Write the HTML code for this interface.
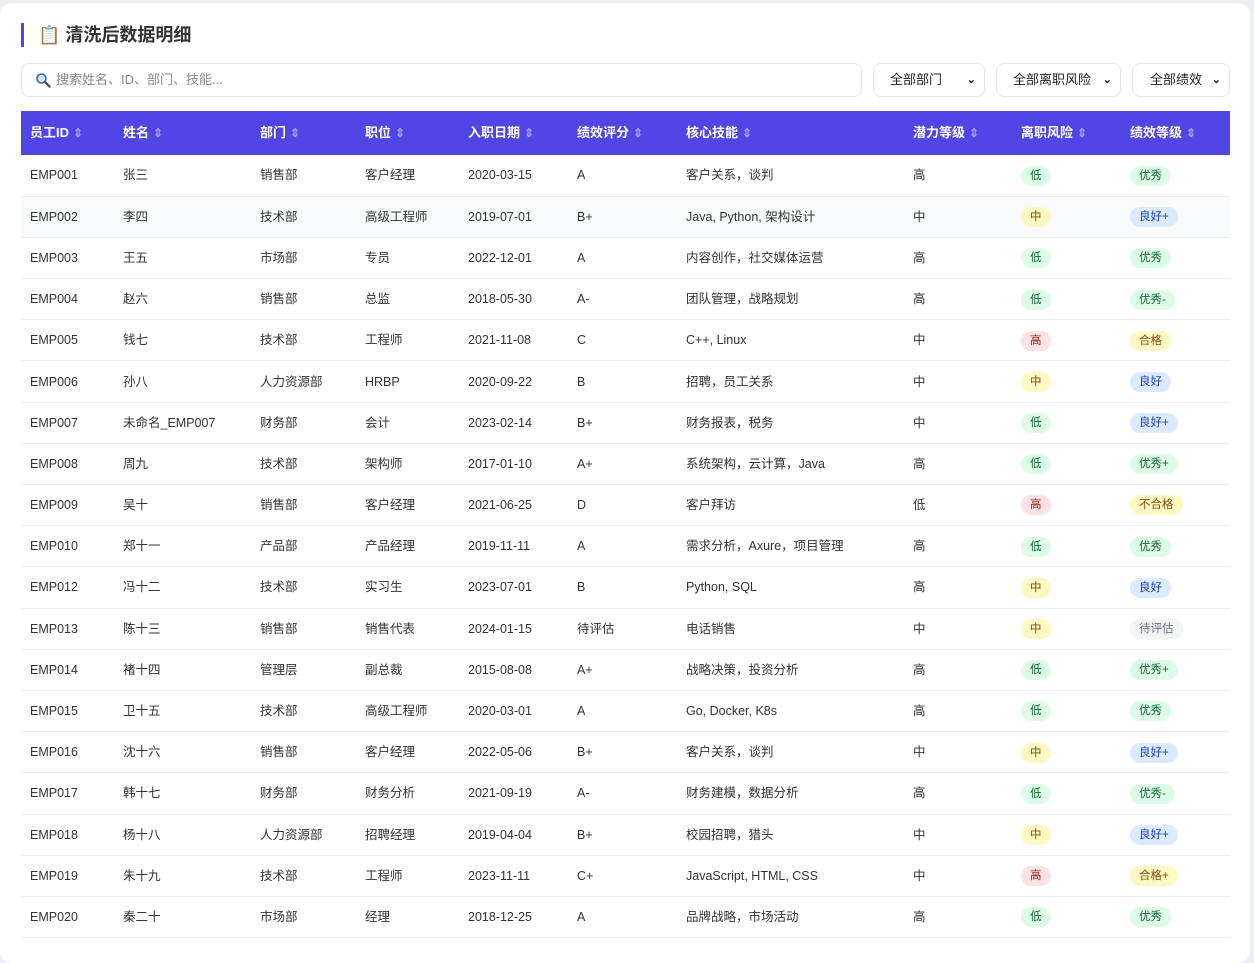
<!DOCTYPE html>
<html><head><meta charset="utf-8"><style>
*{box-sizing:border-box;margin:0;padding:0}
body{width:1254px;height:950px;overflow:hidden;background:#eceef2;font-family:"Liberation Sans","Noto Sans CJK SC",sans-serif;font-size:13px;color:#333}
.card{position:absolute;left:0;top:3px;width:1250px;height:960px;background:#fff;border-radius:12px}
.title{position:absolute;left:21px;top:20px;height:24px;border-left:3px solid #4f46e5;padding-left:14px;font-size:18px;font-weight:bold;color:#333;line-height:24px}
.search{position:absolute;left:21px;top:60px;width:841px;height:34px;border:1px solid #e2e4e8;border-radius:8px;color:#888;font-size:13px;line-height:32px;padding-left:34px}
.search svg{position:absolute;left:13px;top:8px}
.sel{position:absolute;top:60px;height:34px;border:1px solid #e2e4e8;border-radius:8px;font-size:13px;line-height:32px;color:#222}
.sel b{position:absolute;right:8px;top:0;font-size:11px}
table{position:absolute;left:21px;top:108px;width:1209px;border-collapse:collapse}
th{background:#5046e5;color:#fff;height:44px;text-align:left;font-size:13px;padding-left:9px;font-weight:bold;line-height:20px;vertical-align:middle}
th i{font-style:normal;color:#a29cf0;font-size:12px;margin-left:4px}
td{height:41.2px;padding-left:9px;border-bottom:1px solid #ebedf0;color:#333;font-size:12.5px;line-height:20px;vertical-align:middle}
td span{vertical-align:middle}
tr.h td{background:#f8fafc}
.b{display:inline-block;padding:0 9px;height:20px;line-height:20px;border-radius:10px;font-size:11.5px}
.g{background:#dcfce7;color:#166534}.y{background:#fef9c3;color:#854d0e}.r{background:#fee2e2;color:#991b1b}.bl{background:#dbeafe;color:#1e40af}.gr{background:#f3f4f6;color:#6b7280}
</style></head><body>
<div class="card">
<div class="title">📋 清洗后数据明细</div>
<div class="search"><svg width="16" height="16" viewBox="0 0 16 16"><circle cx="6.5" cy="6.5" r="4.5" fill="#cfe3f5" stroke="#3b6b94" stroke-width="1.6"/><path d="M10 10l4.5 4.5" stroke="#555" stroke-width="2.4" stroke-linecap="round"/></svg>搜索姓名、ID、部门、技能...</div>
<div class="sel" style="left:873px;width:112px;padding-left:16px">全部部门<b>⌄</b></div>
<div class="sel" style="left:996px;width:125px;padding-left:16px">全部离职风险<b>⌄</b></div>
<div class="sel" style="left:1132px;width:98px;padding-left:17px">全部绩效<b>⌄</b></div>
<table>
<colgroup><col style="width:93px"><col style="width:137px"><col style="width:105px"><col style="width:103px"><col style="width:109px"><col style="width:109px"><col style="width:227px"><col style="width:108px"><col style="width:109px"><col></colgroup>
<tr><th>员工ID<i>⇕</i></th><th>姓名<i>⇕</i></th><th>部门<i>⇕</i></th><th>职位<i>⇕</i></th><th>入职日期<i>⇕</i></th><th>绩效评分<i>⇕</i></th><th>核心技能<i>⇕</i></th><th>潜力等级<i>⇕</i></th><th>离职风险<i>⇕</i></th><th>绩效等级<i>⇕</i></th></tr>
<tr><td>EMP001</td><td>张三</td><td>销售部</td><td>客户经理</td><td>2020-03-15</td><td>A</td><td>客户关系，谈判</td><td>高</td><td><span class="b g">低</span></td><td><span class="b g">优秀</span></td></tr>
<tr class="h"><td>EMP002</td><td>李四</td><td>技术部</td><td>高级工程师</td><td>2019-07-01</td><td>B+</td><td>Java, Python, 架构设计</td><td>中</td><td><span class="b y">中</span></td><td><span class="b bl">良好+</span></td></tr>
<tr><td>EMP003</td><td>王五</td><td>市场部</td><td>专员</td><td>2022-12-01</td><td>A</td><td>内容创作，社交媒体运营</td><td>高</td><td><span class="b g">低</span></td><td><span class="b g">优秀</span></td></tr>
<tr><td>EMP004</td><td>赵六</td><td>销售部</td><td>总监</td><td>2018-05-30</td><td>A-</td><td>团队管理，战略规划</td><td>高</td><td><span class="b g">低</span></td><td><span class="b g">优秀-</span></td></tr>
<tr><td>EMP005</td><td>钱七</td><td>技术部</td><td>工程师</td><td>2021-11-08</td><td>C</td><td>C++, Linux</td><td>中</td><td><span class="b r">高</span></td><td><span class="b y">合格</span></td></tr>
<tr><td>EMP006</td><td>孙八</td><td>人力资源部</td><td>HRBP</td><td>2020-09-22</td><td>B</td><td>招聘，员工关系</td><td>中</td><td><span class="b y">中</span></td><td><span class="b bl">良好</span></td></tr>
<tr><td>EMP007</td><td>未命名_EMP007</td><td>财务部</td><td>会计</td><td>2023-02-14</td><td>B+</td><td>财务报表，税务</td><td>中</td><td><span class="b g">低</span></td><td><span class="b bl">良好+</span></td></tr>
<tr><td>EMP008</td><td>周九</td><td>技术部</td><td>架构师</td><td>2017-01-10</td><td>A+</td><td>系统架构，云计算，Java</td><td>高</td><td><span class="b g">低</span></td><td><span class="b g">优秀+</span></td></tr>
<tr><td>EMP009</td><td>吴十</td><td>销售部</td><td>客户经理</td><td>2021-06-25</td><td>D</td><td>客户拜访</td><td>低</td><td><span class="b r">高</span></td><td><span class="b y">不合格</span></td></tr>
<tr><td>EMP010</td><td>郑十一</td><td>产品部</td><td>产品经理</td><td>2019-11-11</td><td>A</td><td>需求分析，Axure，项目管理</td><td>高</td><td><span class="b g">低</span></td><td><span class="b g">优秀</span></td></tr>
<tr><td>EMP012</td><td>冯十二</td><td>技术部</td><td>实习生</td><td>2023-07-01</td><td>B</td><td>Python, SQL</td><td>高</td><td><span class="b y">中</span></td><td><span class="b bl">良好</span></td></tr>
<tr><td>EMP013</td><td>陈十三</td><td>销售部</td><td>销售代表</td><td>2024-01-15</td><td>待评估</td><td>电话销售</td><td>中</td><td><span class="b y">中</span></td><td><span class="b gr">待评估</span></td></tr>
<tr><td>EMP014</td><td>褚十四</td><td>管理层</td><td>副总裁</td><td>2015-08-08</td><td>A+</td><td>战略决策，投资分析</td><td>高</td><td><span class="b g">低</span></td><td><span class="b g">优秀+</span></td></tr>
<tr><td>EMP015</td><td>卫十五</td><td>技术部</td><td>高级工程师</td><td>2020-03-01</td><td>A</td><td>Go, Docker, K8s</td><td>高</td><td><span class="b g">低</span></td><td><span class="b g">优秀</span></td></tr>
<tr><td>EMP016</td><td>沈十六</td><td>销售部</td><td>客户经理</td><td>2022-05-06</td><td>B+</td><td>客户关系，谈判</td><td>中</td><td><span class="b y">中</span></td><td><span class="b bl">良好+</span></td></tr>
<tr><td>EMP017</td><td>韩十七</td><td>财务部</td><td>财务分析</td><td>2021-09-19</td><td>A-</td><td>财务建模，数据分析</td><td>高</td><td><span class="b g">低</span></td><td><span class="b g">优秀-</span></td></tr>
<tr><td>EMP018</td><td>杨十八</td><td>人力资源部</td><td>招聘经理</td><td>2019-04-04</td><td>B+</td><td>校园招聘，猎头</td><td>中</td><td><span class="b y">中</span></td><td><span class="b bl">良好+</span></td></tr>
<tr><td>EMP019</td><td>朱十九</td><td>技术部</td><td>工程师</td><td>2023-11-11</td><td>C+</td><td>JavaScript, HTML, CSS</td><td>中</td><td><span class="b r">高</span></td><td><span class="b y">合格+</span></td></tr>
<tr><td>EMP020</td><td>秦二十</td><td>市场部</td><td>经理</td><td>2018-12-25</td><td>A</td><td>品牌战略，市场活动</td><td>高</td><td><span class="b g">低</span></td><td><span class="b g">优秀</span></td></tr>
</table>
</div>
</body></html>
